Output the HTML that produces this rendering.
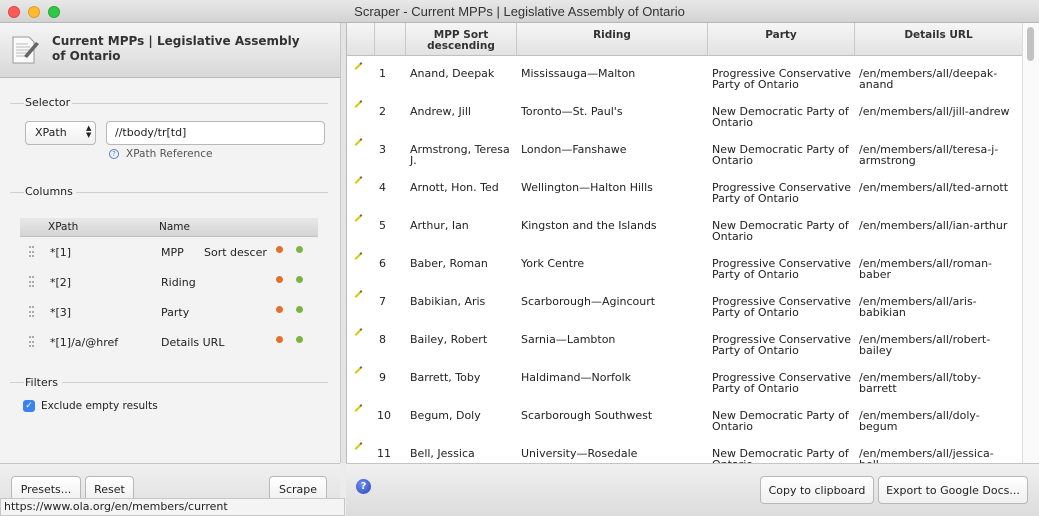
<!DOCTYPE html>
<html><head><meta charset="utf-8"><style>
*{box-sizing:border-box;margin:0;padding:0}
body{width:1039px;height:516px;overflow:hidden;font-family:"DejaVu Sans","Liberation Sans",sans-serif;font-size:11px;color:#222;background:#ececec;position:relative}
.abs{position:absolute}
.title{left:0;top:0;width:1039px;height:23px;background:linear-gradient(#e8e8e8,#d3d3d3);border-bottom:1px solid #b5b5b5;text-align:center;font-size:13px;line-height:23px;color:#333;font-family:"Liberation Sans",sans-serif}
.dot{width:12px;height:12px;border-radius:50%;top:6px}
.left{left:0;top:23px;width:340px;height:493px;background:#f3f3f3}
.hdr{left:0;top:23px;width:340px;height:55px;background:linear-gradient(#f6f6f6,#d8d8d8);border-bottom:1px solid #bbb}
.sec{font-size:11px;color:#222}
.line{height:1px;background:#d0d0d0}
.btn{background:linear-gradient(#fff,#f0f0f0);border:1px solid #b8b8b8;border-radius:4px;text-align:center;font-size:11px}
.table{left:346px;top:23px;width:676px;height:440px;background:#fff;overflow:hidden;border-left:1px solid #bbb}
.th{top:0;height:33px;background:linear-gradient(#f6f6f6,#e2e2e2);border-right:1px solid #c8c8c8;border-bottom:1px solid #c0c0c0;text-align:center;font-weight:bold;font-size:10.5px;line-height:11px;color:#333}
.row{position:absolute;left:0;width:676px;height:38px}
.c{position:absolute;top:12px;white-space:nowrap;line-height:11px}
.pen{position:absolute;left:7px;top:9px;width:9px;height:2px;background:#d8c800;transform:rotate(-45deg);border-right:2px solid #666}
.ic{width:7px;height:7px;border-radius:50%}
</style></head><body>
<div class="abs title">Scraper - Current MPPs | Legislative Assembly of Ontario</div>
<div class="abs dot" style="left:8px;background:#fc5b57;border:1px solid #de4a44"></div>
<div class="abs dot" style="left:28px;background:#fdbb2e;border:1px solid #dea02a"></div>
<div class="abs dot" style="left:48px;background:#33c748;border:1px solid #27aa35"></div>

<div class="abs left"></div>
<div class="abs hdr"></div>
<svg class="abs" style="left:10px;top:34px" width="32" height="32"><path d="M3 3h16l5 5v21H3z" fill="#fafafa" stroke="#999"/><path d="M6 10h12M6 13h14M6 16h14M6 19h14M6 22h12" stroke="#bbb"/><path d="M14 22l12-14 3 2-12 14z" fill="#666"/></svg>
<div class="abs" style="left:52px;top:34px;font-weight:bold;font-size:12px;line-height:15px;color:#333;width:260px">Current MPPs | Legislative Assembly of Ontario</div>

<div class="abs line" style="left:10px;top:103px;width:14px"></div>
<div class="abs sec" style="left:25px;top:96px">Selector</div>
<div class="abs line" style="left:72px;top:103px;width:256px"></div>
<div class="abs btn" style="left:25px;top:121px;width:71px;height:24px;line-height:22px;text-align:left;padding-left:9px">XPath</div>
<div class="abs" style="left:86px;top:125px;font-size:7px;line-height:7px">▲<br>▼</div>
<div class="abs" style="left:106px;top:121px;width:219px;height:24px;border:1px solid #b8b8b8;border-radius:4px;background:#fff;padding-left:8px;line-height:22px">//tbody/tr[td]</div>
<div class="abs" style="left:109px;top:149px;width:10px;height:10px;border:1px solid #5a7bd0;border-radius:50%;font-size:7px;line-height:8px;text-align:center;color:#5a7bd0">?</div>
<div class="abs" style="left:126px;top:148px;color:#555;font-size:10.5px">XPath Reference</div>

<div class="abs line" style="left:10px;top:192px;width:14px"></div>
<div class="abs sec" style="left:25px;top:185px">Columns</div>
<div class="abs line" style="left:76px;top:192px;width:252px"></div>
<div class="abs" style="left:20px;top:218px;width:298px;height:19px;background:linear-gradient(#e8e8e8,#d4d4d4);border-bottom:1px solid #c0c0c0"></div>
<div class="abs" style="left:48px;top:221px;font-size:10.5px">XPath</div>
<div class="abs" style="left:159px;top:221px;font-size:10.5px">Name</div>

<div class="abs" style="left:29px;top:246px;width:5px;height:11px;border-left:2px dotted #aaa;border-right:2px dotted #aaa"></div>
<div class="abs" style="left:50px;top:246px">*[1]</div><div class="abs" style="left:161px;top:246px">MPP</div><div class="abs" style="left:204px;top:246px">Sort descer</div>
<div class="abs" style="left:29px;top:276px;width:5px;height:11px;border-left:2px dotted #aaa;border-right:2px dotted #aaa"></div>
<div class="abs" style="left:50px;top:276px">*[2]</div><div class="abs" style="left:161px;top:276px">Riding</div>
<div class="abs" style="left:29px;top:306px;width:5px;height:11px;border-left:2px dotted #aaa;border-right:2px dotted #aaa"></div>
<div class="abs" style="left:50px;top:306px">*[3]</div><div class="abs" style="left:161px;top:306px">Party</div>
<div class="abs" style="left:29px;top:336px;width:5px;height:11px;border-left:2px dotted #aaa;border-right:2px dotted #aaa"></div>
<div class="abs" style="left:50px;top:336px">*[1]/a/@href</div><div class="abs" style="left:161px;top:336px">Details URL</div>
<div class="abs ic" style="left:276px;top:246px;background:#e0702a"></div><div class="abs ic" style="left:296px;top:246px;background:#7cb342"></div>
<div class="abs ic" style="left:276px;top:276px;background:#e0702a"></div><div class="abs ic" style="left:296px;top:276px;background:#7cb342"></div>
<div class="abs ic" style="left:276px;top:306px;background:#e0702a"></div><div class="abs ic" style="left:296px;top:306px;background:#7cb342"></div>
<div class="abs ic" style="left:276px;top:336px;background:#e0702a"></div><div class="abs ic" style="left:296px;top:336px;background:#7cb342"></div>

<div class="abs line" style="left:10px;top:382px;width:14px"></div>
<div class="abs sec" style="left:25px;top:376px">Filters</div>
<div class="abs line" style="left:62px;top:382px;width:266px"></div>
<div class="abs" style="left:23px;top:400px;width:12px;height:12px;border-radius:3px;background:#3b82f0;color:#fff;font-size:9px;line-height:12px;text-align:center">✓</div>
<div class="abs" style="left:41px;top:400px;font-size:10.5px">Exclude empty results</div>

<div class="abs" style="left:0;top:463px;width:340px;height:53px;background:linear-gradient(#f0f0f0,#dedede);border-top:1px solid #c4c4c4"></div>
<div class="abs btn" style="left:11px;top:476px;width:70px;height:26px;line-height:26px">Presets...</div>
<div class="abs btn" style="left:85px;top:476px;width:49px;height:26px;line-height:26px">Reset</div>
<div class="abs btn" style="left:269px;top:476px;width:58px;height:26px;line-height:26px">Scrape</div>
<div class="abs" style="left:0;top:498px;width:345px;height:18px;background:#f4f4f4;border:1px solid #c8c8c8;padding-left:3px;line-height:16px;font-size:11px">https://www.ola.org/en/members/current</div>

<div class="abs" style="left:340px;top:23px;width:6px;height:440px;background:#e4e4e4;border-left:1px solid #c8c8c8"></div>

<div class="abs table">
<div class="abs th" style="left:0;width:28px"></div>
<div class="abs th" style="left:28px;width:31px"></div>
<div class="abs th" style="left:59px;width:111px;padding-top:7px">MPP Sort<br>descending</div>
<div class="abs th" style="left:170px;width:191px;padding-top:7px">Riding</div>
<div class="abs th" style="left:361px;width:147px;padding-top:7px">Party</div>
<div class="abs th" style="left:508px;width:168px;padding-top:7px">Details URL</div>
<div style="position:absolute;top:33px;left:0;width:676px">
<div class="row" style="top:0"><i class="pen"></i><span class="c" style="left:32px">1</span><span class="c" style="left:63px">Anand, Deepak</span><span class="c" style="left:174px">Mississauga—Malton</span><span class="c" style="left:365px">Progressive Conservative<br>Party of Ontario</span><span class="c" style="left:512px">/en/members/all/deepak-<br>anand</span></div>
<div class="row" style="top:38px"><i class="pen"></i><span class="c" style="left:32px">2</span><span class="c" style="left:63px">Andrew, Jill</span><span class="c" style="left:174px">Toronto—St. Paul's</span><span class="c" style="left:365px">New Democratic Party of<br>Ontario</span><span class="c" style="left:512px">/en/members/all/jill-andrew</span></div>
<div class="row" style="top:76px"><i class="pen"></i><span class="c" style="left:32px">3</span><span class="c" style="left:63px">Armstrong, Teresa<br>J.</span><span class="c" style="left:174px">London—Fanshawe</span><span class="c" style="left:365px">New Democratic Party of<br>Ontario</span><span class="c" style="left:512px">/en/members/all/teresa-j-<br>armstrong</span></div>
<div class="row" style="top:114px"><i class="pen"></i><span class="c" style="left:32px">4</span><span class="c" style="left:63px">Arnott, Hon. Ted</span><span class="c" style="left:174px">Wellington—Halton Hills</span><span class="c" style="left:365px">Progressive Conservative<br>Party of Ontario</span><span class="c" style="left:512px">/en/members/all/ted-arnott</span></div>
<div class="row" style="top:152px"><i class="pen"></i><span class="c" style="left:32px">5</span><span class="c" style="left:63px">Arthur, Ian</span><span class="c" style="left:174px">Kingston and the Islands</span><span class="c" style="left:365px">New Democratic Party of<br>Ontario</span><span class="c" style="left:512px">/en/members/all/ian-arthur</span></div>
<div class="row" style="top:190px"><i class="pen"></i><span class="c" style="left:32px">6</span><span class="c" style="left:63px">Baber, Roman</span><span class="c" style="left:174px">York Centre</span><span class="c" style="left:365px">Progressive Conservative<br>Party of Ontario</span><span class="c" style="left:512px">/en/members/all/roman-<br>baber</span></div>
<div class="row" style="top:228px"><i class="pen"></i><span class="c" style="left:32px">7</span><span class="c" style="left:63px">Babikian, Aris</span><span class="c" style="left:174px">Scarborough—Agincourt</span><span class="c" style="left:365px">Progressive Conservative<br>Party of Ontario</span><span class="c" style="left:512px">/en/members/all/aris-<br>babikian</span></div>
<div class="row" style="top:266px"><i class="pen"></i><span class="c" style="left:32px">8</span><span class="c" style="left:63px">Bailey, Robert</span><span class="c" style="left:174px">Sarnia—Lambton</span><span class="c" style="left:365px">Progressive Conservative<br>Party of Ontario</span><span class="c" style="left:512px">/en/members/all/robert-<br>bailey</span></div>
<div class="row" style="top:304px"><i class="pen"></i><span class="c" style="left:32px">9</span><span class="c" style="left:63px">Barrett, Toby</span><span class="c" style="left:174px">Haldimand—Norfolk</span><span class="c" style="left:365px">Progressive Conservative<br>Party of Ontario</span><span class="c" style="left:512px">/en/members/all/toby-<br>barrett</span></div>
<div class="row" style="top:342px"><i class="pen"></i><span class="c" style="left:30px">10</span><span class="c" style="left:63px">Begum, Doly</span><span class="c" style="left:174px">Scarborough Southwest</span><span class="c" style="left:365px">New Democratic Party of<br>Ontario</span><span class="c" style="left:512px">/en/members/all/doly-<br>begum</span></div>
<div class="row" style="top:380px"><i class="pen"></i><span class="c" style="left:30px">11</span><span class="c" style="left:63px">Bell, Jessica</span><span class="c" style="left:174px">University—Rosedale</span><span class="c" style="left:365px">New Democratic Party of<br>Ontario</span><span class="c" style="left:512px">/en/members/all/jessica-<br>bell</span></div>
</div>
</div>
<div class="abs" style="left:1022px;top:23px;width:17px;height:440px;background:#fafafa;border-left:1px solid #ddd"></div>
<div class="abs" style="left:1027px;top:27px;width:7px;height:34px;border-radius:4px;background:#c2c2c2"></div>

<div class="abs" style="left:346px;top:463px;width:693px;height:53px;background:linear-gradient(#f0f0f0,#dcdcdc);border-top:1px solid #c4c4c4"></div>
<div class="abs" style="left:356px;top:479px;width:15px;height:15px;border-radius:50%;background:radial-gradient(circle at 40% 35%,#6f8ff0,#2a45b8);color:#fff;font-weight:bold;font-size:10px;line-height:15px;text-align:center">?</div>
<div class="abs btn" style="left:760px;top:476px;width:114px;height:28px;line-height:28px">Copy to clipboard</div>
<div class="abs btn" style="left:878px;top:476px;width:150px;height:28px;line-height:28px">Export to Google Docs...</div>
</body></html>
